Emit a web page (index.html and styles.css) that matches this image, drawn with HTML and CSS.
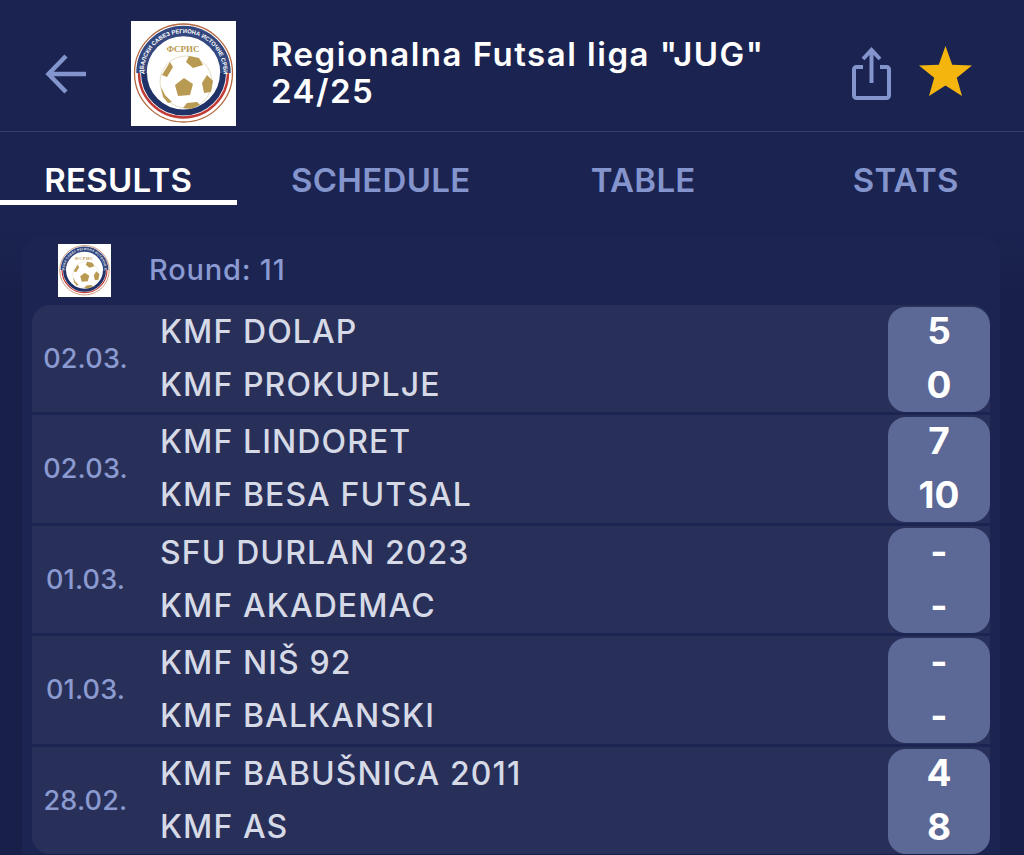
FILE: index.html
```html
<!DOCTYPE html>
<html lang="en">
<head>
    <meta charset="UTF-8">
    <meta name="viewport" content="width=device-width, initial-scale=1.0">
    <title>Regionalna Futsal liga "JUG"</title>
    <link rel="stylesheet" href="styles.css">
</head>
<body>
    <!-- logo is drawn once and reused in the header and the round row -->
    <svg class="defs" width="0" height="0">
        <defs>
            <path id="arc-top" d="M12.500 52 A40 40 0 1 1 92.500 52"/>
            <symbol id="logo" viewBox="0 0 105 105">
                <rect width="105" height="105" fill="#fff"/>
                <circle cx="52.500" cy="52" r="49" fill="#fff" stroke="#b5683f" stroke-width="1.300"/>
                <path d="M10.500 52 A42 42 0 1 1 94.500 52" fill="none" stroke="#34487f" stroke-width="10.500"/>
                <path d="M13 52 A39.500 39.500 0 0 0 92 52" fill="none" stroke="#1f3166" stroke-width="6"/>
                <path d="M8 52 A44.500 44.500 0 0 0 97 52" fill="none" stroke="#c23a35" stroke-width="2.400"/>
                <text class="logo-ring"><textPath href="#arc-top" startOffset="50%" text-anchor="middle">ФУДБАЛСКИ САВЕЗ РЕГИОНА ИСТОЧНЕ СРБИЈЕ</textPath></text>
                <text class="logo-name" x="52" y="31" text-anchor="middle">ФСРИС</text>
                <circle cx="55" cy="61" r="26" fill="#fff" stroke="#d8cfae" stroke-width=".7"/>
                <g fill="#b99a52">
                    <path d="M53 57 L62 63 L59 74 L47 75 L44 64 Z"/>
                    <path d="M58 35 L68 37 L72 44 L62 47 L55 41 Z"/>
                    <path d="M39 41 L42 46 L36 56 L31 54 Z"/>
                    <path d="M76 54 L82 60 L80 71 L73 72 L71 62 Z"/>
                    <path d="M56 82 L66 81 L69 84 L60 88 L52 87 Z"/>
                    <path d="M30 66 L34 74 L41 81 L37 82 L32 76 Z"/>
                </g>
            </symbol>
        </defs>
    </svg>

    <header class="header">
        <svg class="icon-back" viewBox="0 0 42 42"><path d="M41 21H4M21 3 3.500 21 21 39"/></svg>
        <svg class="logo-big"><use href="#logo"/></svg>
        <h1 class="title">Regionalna Futsal liga "JUG" 24/25</h1>
        <svg class="icon-share" viewBox="0 0 39 53"><path d="M11 20H4.500A2.500 2.500 0 0 0 2 22.500v26A2.500 2.500 0 0 0 4.500 51h30a2.500 2.500 0 0 0 2.500-2.500v-26a2.500 2.500 0 0 0-2.500-2.500H28"/><path d="M19.500 36V4M11 12l8.500-9L28 12"/></svg>
        <svg class="icon-star" viewBox="0 0 53 50"><path d="M26.500 0l6.700 18.800L53 19.500 37.800 31.800 43 50 26.500 39.500 10 50l5.200-18.200L0 19.500l19.800-.7z"/></svg>
    </header>

    <nav class="tabs">
        <a class="tab active">RESULTS</a>
        <a class="tab">SCHEDULE</a>
        <a class="tab">TABLE</a>
        <a class="tab">STATS</a>
    </nav>

    <main class="card">
        <div class="round">
            <svg class="logo-small"><use href="#logo"/></svg>
            <span>Round: 11</span>
        </div>
        <div class="matches">
            <article class="match">
                <div class="date">02.03.</div>
                <div class="teams"><p>KMF DOLAP</p><p>KMF PROKUPLJE</p></div>
                <div class="score"><p>5</p><p>0</p></div>
            </article>
            <article class="match">
                <div class="date">02.03.</div>
                <div class="teams"><p>KMF LINDORET</p><p>KMF BESA FUTSAL</p></div>
                <div class="score"><p>7</p><p>10</p></div>
            </article>
            <article class="match">
                <div class="date">01.03.</div>
                <div class="teams"><p>SFU DURLAN 2023</p><p>KMF AKADEMAC</p></div>
                <div class="score"><p>-</p><p>-</p></div>
            </article>
            <article class="match">
                <div class="date">01.03.</div>
                <div class="teams"><p>KMF NIŠ 92</p><p>KMF BALKANSKI</p></div>
                <div class="score"><p>-</p><p>-</p></div>
            </article>
            <article class="match">
                <div class="date">28.02.</div>
                <div class="teams"><p>KMF BABUŠNICA 2011</p><p>KMF AS</p></div>
                <div class="score"><p>4</p><p>8</p></div>
            </article>
        </div>
    </main>
</body>
</html>
```
FILE: styles.css
```css
html, body {
    height: 855px;
    overflow: hidden;
}

body {
    margin: 0;
    background: linear-gradient(#1b2350 225px, #18204a 290px);
    font-family: "Inter", "Liberation Sans", sans-serif;
}

p {
    margin: 0;
}

.defs {
    display: block;
    height: 0;
}

.logo-ring {
    font-family: "Liberation Sans", sans-serif;
    font-size: 5.800px;
    font-weight: 700;
    fill: #fff;
}

.logo-name {
    font-family: "Liberation Serif", serif;
    font-size: 9px;
    font-weight: 700;
    fill: #b99a52;
}

.header {
    display: flex;
    align-items: center;
    box-sizing: border-box;
    height: 132px;
    padding: 16px 0 0 45px;
    border-bottom: 1px solid #343d6c;
}

.icon-back {
    width: 42px;
    height: 42px;
    fill: none;
    stroke: #8494cc;
    stroke-width: 4.500;
}

.logo-big {
    width: 105px;
    height: 105px;
    margin-left: 44px;
}

.title {
    width: 510px;
    margin: -2px 0 0 35px;
    color: #fff;
    font-size: 33px;
    font-weight: 600;
    letter-spacing: 1.500px;
    line-height: 37px;
}

.icon-share {
    width: 39px;
    height: 53px;
    margin-left: 71px;
    fill: none;
    stroke: #8494cc;
    stroke-width: 4;
}

.icon-star {
    width: 53px;
    height: 50px;
    margin: -6px 0 0 28px;
    fill: #f5b50f;
}

.tabs {
    display: grid;
    grid-template-columns: repeat(4, 1fr);
    gap: 26px;
    height: 73px;
}

.tab {
    height: 68px;
    color: #8494cc;
    font-size: 33px;
    font-weight: 600;
    letter-spacing: .3px;
    line-height: 96px;
    text-align: center;
    overflow: hidden;
}

.active {
    color: #fff;
    border-bottom: 5px solid #fff;
}

.card {
    margin: 32px 24px 0 22px;
    padding: 0 10px;
    background-color: #1c2452;
    border-radius: 18px 18px 0 0;
}

.round {
    display: flex;
    align-items: center;
    height: 68px;
    color: #8b9ad0;
    font-size: 29px;
    font-weight: 500;
    letter-spacing: .8px;
}

.logo-small {
    width: 53px;
    height: 53px;
    margin: 0 38px 2px 26px;
}

.round span {
    margin-bottom: 4px;
}

.matches {
    display: flex;
    flex-direction: column;
    gap: 3px;
}

.match {
    display: grid;
    grid-template-columns: 107px 1fr 102px;
    height: 107.400px;
    background-color: #283059;
}

.match:first-child {
    border-radius: 18px 18px 0 0;
}

.match:last-child {
    border-radius: 0 0 18px 18px;
}

.date {
    align-self: center;
    margin-bottom: 2px;
    color: #8b9ad0;
    font-size: 27px;
    font-weight: 500;
    letter-spacing: .2px;
    text-align: center;
}

.teams {
    padding: 0 0 0 21px;
    color: #d6d9e6;
    font-size: 32px;
    font-weight: 500;
    letter-spacing: 1.100px;
    line-height: 53px;
}

.score {
    margin: 2px 0;
    background-color: #5c6896;
    border-radius: 18px;
    color: #fff;
    font-size: 37px;
    font-weight: 700;
    line-height: 54px;
    text-align: center;
}

.score p:first-child {
    margin-top: -3px;
}
```
